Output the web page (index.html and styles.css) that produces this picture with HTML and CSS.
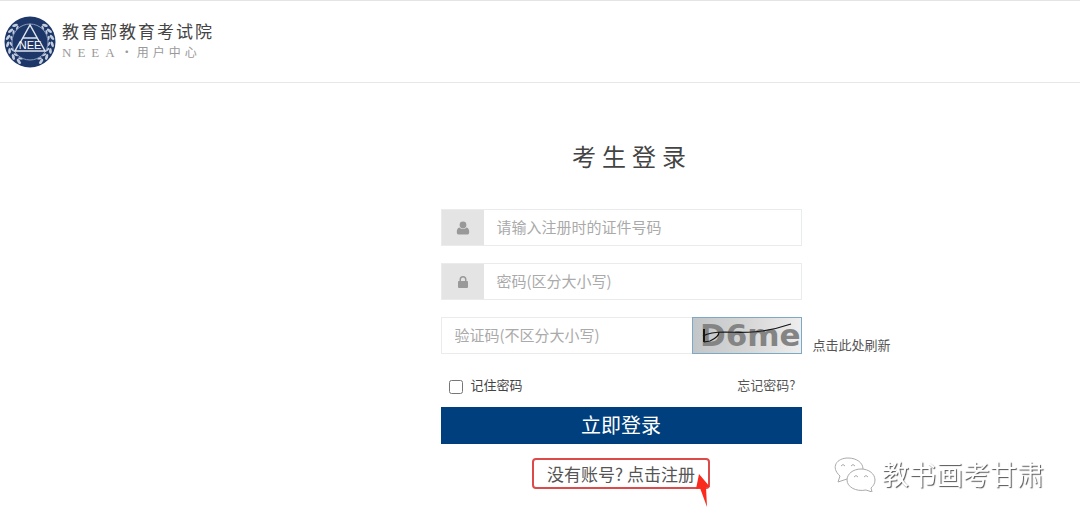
FILE: index.html
```html
<!DOCTYPE html>
<html lang="zh-CN">
<head>
  <meta charset="UTF-8">
  <meta name="viewport" content="width=device-width, initial-scale=1.0">
  <title>考生登录</title>
  <link rel="stylesheet" href="styles.css">
</head>
<body>
  <header>
    <svg class="logo" viewBox="0 0 52 52" aria-hidden="true">
      <defs>
        <g id="leaf">
          <ellipse cx="26" cy="3.600" rx="1.4" ry="3" transform="rotate(65 26 3.6)"/>
          <ellipse cx="26" cy="7" rx="1.1" ry="2.4" transform="rotate(115 26 7)"/>
        </g>
        <g id="branch">
          <use href="#leaf" transform="rotate(42 26 26)"/>
          <use href="#leaf" transform="rotate(60 26 26)"/>
          <use href="#leaf" transform="rotate(78 26 26)"/>
          <use href="#leaf" transform="rotate(96 26 26)"/>
          <use href="#leaf" transform="rotate(114 26 26)"/>
          <use href="#leaf" transform="rotate(132 26 26)"/>
          <use href="#leaf" transform="rotate(150 26 26)"/>
        </g>
      </defs>
      <circle cx="26" cy="26" r="25.5" fill="#1d3768"/>
      <g fill="#c3cede">
        <use href="#branch"/>
        <use href="#branch" transform="matrix(-1 0 0 1 52 0)"/>
      </g>
      <circle cx="26" cy="26" r="18" fill="#1d3768" stroke="#8d9dbb"/>
      <path d="M16.500 26 26 9l9.500 17M18.500 22h15M16 26l-5 9h30l-5-9" fill="none" stroke="#dfe5ee" stroke-width="1.5"/>
      <text x="26" y="33" text-anchor="middle">NEE</text>
    </svg>
    <div class="brand">
      <div class="brand-name">教育部教育考试院</div>
      <div class="brand-sub"><span>NEEA</span>・用户中心</div>
    </div>
  </header>

  <main>
    <form class="login">
      <h1>考生登录</h1>
      <div class="field">
        <label for="account">
          <svg viewBox="0 0 14 14" role="img" aria-label="证件号码">
            <path d="M7 0.5a3.4 3.4 0 0 1 3.4 3.4C10.400 6 8.900 7.500 7 7.500S3.600 6 3.600 3.900A3.400 3.400 0 0 1 7 .5zM3.600 6.600C5.500 8.600 8.500 8.600 10.400 6.600c2 .3 2.800 2 2.800 4.600 0 1.500-.8 2.300-2.200 2.300H3c-1.400 0-2.200-.8-2.200-2.300 0-2.600.8-4.300 2.800-4.600z"/>
          </svg>
        </label>
        <input type="text" id="account" placeholder="请输入注册时的证件号码">
      </div>
      <div class="field">
        <label for="password">
          <svg viewBox="0 0 14 14" role="img" aria-label="密码">
            <path d="M3.500 6V4.500a3.500 3.500 0 0 1 7 0V6h.5q1 0 1 1v5q0 1-1 1H3q-1 0-1-1V7q0-1 1-1zM5 6h4V4.500a2 2 0 0 0-4 0z"/>
          </svg>
        </label>
        <input type="password" id="password" placeholder="密码(区分大小写)">
      </div>
      <div class="field">
        <input type="text" id="captcha" aria-label="验证码" placeholder="验证码(不区分大小写)">
        <svg class="captcha" viewBox="0 0 108 35">
          <defs>
            <linearGradient id="paper">
              <stop offset="0" stop-color="#c3c6c8"/>
              <stop offset="0.5" stop-color="#d6d6d6"/>
              <stop offset="1" stop-color="#eeeeee"/>
            </linearGradient>
          </defs>
          <rect width="108" height="35" fill="url(#paper)"/>
          <text x="7" y="28">D6me</text>
          <path d="M11 24l6-1q9-4 9-9M10 18q7-4 22-4c20 1 40 1 66-8" fill="none" stroke="#151515" stroke-width="1.2"/>
          <path d="M11 11v13" stroke="#151515" stroke-width="2"/>
        </svg>
        <a class="refresh" href="#">点击此处刷新</a>
      </div>
      <div class="options">
        <input type="checkbox" id="remember">
        <label for="remember">记住密码</label>
        <a href="#">忘记密码?</a>
      </div>
      <button type="submit">立即登录</button>
      <div class="register">
        <a href="#"><span>没有账号?</span><span>点击注册</span></a>
        <svg class="arrow" viewBox="0 0 14 34" aria-hidden="true">
          <path d="M3 0 14 13 10 13 11 33 4 14 0 15z" fill="#fa2a1c"/>
        </svg>
      </div>
    </form>
  </main>

  <div class="watermark">
    <svg viewBox="0 0 44 36" aria-hidden="true">
      <path d="M15 23l-9 3 2-6C-2 11 5 2 16 2c9 0 15 5 15 11"/>
      <path d="M29 13c8 0 14 5 14 11 0 4-2 6-4 8l1 4-6-2c-10 2-19-3-19-10 0-6 6-11 14-11z"/>
      <path d="M9 10q2-3 4 0M19 10q2-3 4 0M22 21q2-3 4 0M32 21q2-3 4 0"/>
    </svg>
    <span>教书画考甘肃</span>
  </div>
</body>
</html>
```

FILE: styles.css
```css
* {
  box-sizing: border-box;
}
body {
  margin: 0;
  font-family: "Noto Sans CJK SC", sans-serif;
  font-size: 13px;
  line-height: 20px;
  color: #444;
  background: #fff;
}
a {
  color: #555;
  text-decoration: none;
}
header {
  display: flex;
  align-items: center;
  gap: 6px;
  height: 83px;
  padding: 0 4px;
  border-top: 1px solid #e4e4e4;
  border-bottom: 1px solid #e8e8e8;
}
.logo {
  width: 52px;
  height: 52px;
}
.logo text {
  font: 11px "Liberation Sans", sans-serif;
  fill: #fff;
}
.brand-name {
  font-size: 17px;
  line-height: 22px;
  letter-spacing: 2px;
}
.brand-sub {
  font-family: "Liberation Serif", "Noto Sans CJK SC", serif;
  font-size: 12px;
  line-height: 22px;
  letter-spacing: 4px;
  color: #999;
}
.brand-sub span {
  font-size: 13px;
  letter-spacing: 6px;
}
main {
  padding: 55px 0 32px 162px;
}
.login {
  width: 361px;
  margin: 0 auto;
}
h1 {
  margin: 0 0 35px;
  padding-left: 22px;
  font-size: 24px;
  font-weight: 400;
  line-height: 36px;
  letter-spacing: 6px;
  text-align: center;
}
.field {
  position: relative;
  display: flex;
  height: 37px;
  margin-bottom: 17px;
  border: 1px solid #e9ebed;
}
.field label {
  display: flex;
  align-items: center;
  justify-content: center;
  width: 42px;
  background: #e4e4e4;
}
.field label svg {
  width: 14px;
  height: 14px;
  fill: #999;
}
.field input {
  flex: 1;
  min-width: 0;
  padding: 0 13px 2px;
  border: 0;
  outline: 0;
  background: #fff;
  font: inherit;
  font-size: 15px;
}
.field input::placeholder {
  color: #aaa;
  opacity: 1;
}
.captcha {
  width: 110px;
  height: 37px;
  margin: -1px;
  border: 1px solid #7ea9c6;
}
.captcha text {
  font: bold 31px "DejaVu Sans", sans-serif;
  fill: #848484;
}
/* sits outside the form column, right of the captcha */
.refresh {
  position: absolute;
  left: 100%;
  bottom: -2px;
  margin-left: 12px;
  white-space: nowrap;
}
.options {
  display: flex;
  align-items: center;
  height: 20px;
  margin: 21px 0 12px;
  padding: 0 6px 0 8px;
}
.options input {
  width: 14px;
  height: 14px;
  margin: 4px 8px 0 0;
}
.options a {
  margin-left: auto;
}
button {
  display: block;
  width: 100%;
  height: 37px;
  padding: 0 0 2px;
  border: 0;
  background: #003f7e;
  color: #fff;
  font: inherit;
  font-size: 20px;
  cursor: pointer;
}
.register {
  position: relative;
  width: 178px;
  margin: 14px auto 0;
}
.register a {
  display: flex;
  justify-content: center;
  gap: 4px;
  border: 2px solid #dc4a4a;
  border-radius: 4px;
  font-size: 17px;
  line-height: 27px;
}
.arrow {
  position: absolute;
  right: 0;
  top: 16px;
  width: 14px;
  height: 34px;
}
.watermark {
  position: fixed;
  right: 36px;
  bottom: 30px;
  display: flex;
  align-items: center;
  gap: 6px;
  color: #fff;
  font-size: 27px;
  line-height: 38px;
  text-shadow: 1px 1px 1px #555;
}
.watermark svg {
  width: 44px;
  height: 36px;
  fill: #fff;
  stroke: #aaa;
}
```
